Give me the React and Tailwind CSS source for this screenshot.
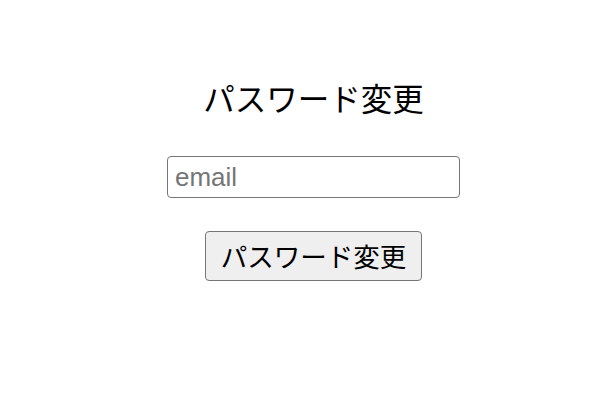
export default function App() {
    return (
        <div className="min-h-[400px] bg-white flex flex-col items-center pt-[77px] pl-[15px] font-['Liberation_Sans','Noto_Sans_CJK_JP',sans-serif]">
            <h1 className="text-[31.5px] leading-[40px] text-black font-['Noto_Sans_CJK_JP',sans-serif]">パスワード変更</h1>
            <input
                type="email"
                placeholder="email"
                className="mt-[39px] w-[293px] h-[42px] border border-[#767676] rounded-[4px] px-[7px] text-[26px] text-black placeholder:text-[#757575] outline-none"
            />
            <button className="mt-[33px] w-[217px] h-[50px] border border-[#767676] rounded-[4px] bg-[#efefef] text-[26.5px] text-black font-['Noto_Sans_CJK_JP',sans-serif]">
                パスワード変更
            </button>
        </div>
    );
}
